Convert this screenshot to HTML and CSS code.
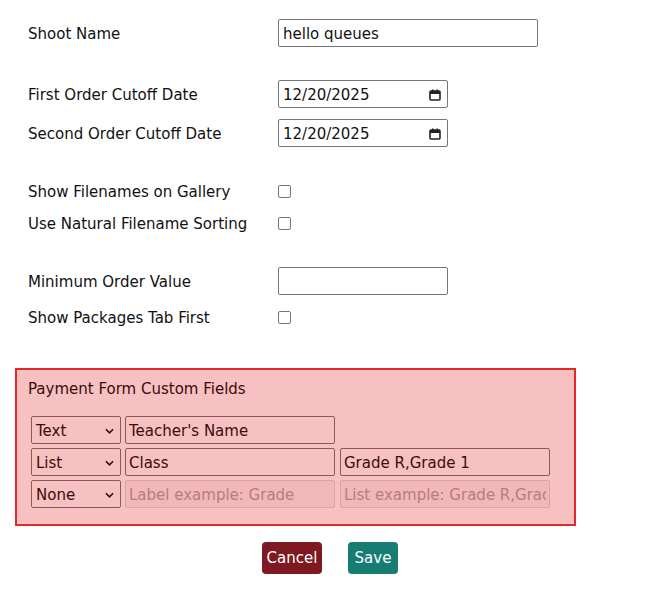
FILE: index.html
```html
<!DOCTYPE html>
<html>
<head>
<meta charset="utf-8">
<link rel="stylesheet" href="styles.css">
</head>
<body>
<div class="page">
  <div class="row r1"><label class="lbl">Shoot Name</label><input class="txt wide" type="text" value="hello queues"></div>
  <div class="row r2"><label class="lbl">First Order Cutoff Date</label><div class="txt date"><span>12/20/2025</span><svg class="cal" viewBox="0 0 12 12" width="12" height="12"><rect x="1" y="2" width="10" height="9" rx="1" fill="none" stroke="#222" stroke-width="1.6"/><rect x="1" y="2" width="10" height="3" fill="#222"/><rect x="3" y="0.5" width="1.6" height="2.5" fill="#222"/><rect x="7.4" y="0.5" width="1.6" height="2.5" fill="#222"/></svg></div></div>
  <div class="row r3"><label class="lbl">Second Order Cutoff Date</label><div class="txt date"><span>12/20/2025</span><svg class="cal" viewBox="0 0 12 12" width="12" height="12"><rect x="1" y="2" width="10" height="9" rx="1" fill="none" stroke="#222" stroke-width="1.6"/><rect x="1" y="2" width="10" height="3" fill="#222"/><rect x="3" y="0.5" width="1.6" height="2.5" fill="#222"/><rect x="7.4" y="0.5" width="1.6" height="2.5" fill="#222"/></svg></div></div>
  <div class="row chk r4"><label class="lbl">Show Filenames on Gallery</label><span class="box"></span></div>
  <div class="row chk r5"><label class="lbl">Use Natural Filename Sorting</label><span class="box"></span></div>
  <div class="row r6"><label class="lbl">Minimum Order Value</label><input class="txt mid" type="text" value=""></div>
  <div class="row chk r7"><label class="lbl">Show Packages Tab First</label><span class="box"></span></div>

  <div class="custom">
    <div class="custom-title">Payment Form Custom Fields</div>
    <div class="frow">
      <div class="sel"><span>Text</span><svg viewBox="0 0 10 6" width="9" height="6"><path d="M1 1 L5 5 L9 1" fill="none" stroke="#3a0c0c" stroke-width="1.8"/></svg></div>
      <input class="fin" type="text" value="Teacher's Name">
    </div>
    <div class="frow">
      <div class="sel"><span>List</span><svg viewBox="0 0 10 6" width="9" height="6"><path d="M1 1 L5 5 L9 1" fill="none" stroke="#3a0c0c" stroke-width="1.8"/></svg></div>
      <input class="fin" type="text" value="Class">
      <input class="fin" type="text" value="Grade R,Grade 1">
    </div>
    <div class="frow">
      <div class="sel"><span>None</span><svg viewBox="0 0 10 6" width="9" height="6"><path d="M1 1 L5 5 L9 1" fill="none" stroke="#3a0c0c" stroke-width="1.8"/></svg></div>
      <input class="fin dis" type="text" placeholder="Label example: Grade" disabled>
      <input class="fin dis" type="text" placeholder="List example: Grade R,Grade 1" disabled>
    </div>
  </div>
</div>
<div class="actions">
  <button class="btn cancel">Cancel</button>
  <button class="btn save">Save</button>
</div>
</body>
</html>
```
FILE: styles.css
```css
html, body {
  margin: 0;
  padding: 0;
  background: #fff;
}
body {
  font-family: "DejaVu Sans", Verdana, sans-serif;
  font-size: 15px;
  color: #111;
}
.page {
  padding: 19px 0 0 15px;
}
.row {
  display: flex;
  align-items: center;
  height: 28px;
  padding-left: 13px;
}
.row.chk { height: 20px; }
.r2 { margin-top: 33px; }
.r3 { margin-top: 11px; }
.r4 { margin-top: 34px; }
.r5 { margin-top: 12px; }
.r6 { margin-top: 34px; }
.r7 { margin-top: 12px; }
.lbl {
  width: 250px;
  flex: none;
  padding-top: 2px;
}
.txt {
  box-sizing: border-box;
  height: 28px;
  border: 1px solid #767676;
  border-radius: 2px;
  font-family: inherit;
  font-size: 15px;
  color: #111;
  padding: 1px 4px 0;
  background: #fff;
  outline: none;
  margin: 0;
}
.wide { width: 260px; }
.mid { width: 170px; }
.date {
  width: 170px;
  display: flex;
  align-items: center;
  justify-content: space-between;
  padding: 1px 6px 0 4px;
}
.box {
  width: 11px;
  height: 11px;
  border: 1px solid #767676;
  border-radius: 2px;
  background: #fff;
}
.custom {
  margin-top: 41px;
  box-sizing: border-box;
  width: 561px;
  height: 158px;
  border: 2px solid #e32a2a;
  background: #f7c1c1;
  padding: 9px 0 0 14px;
  color: #3a0c0c;
}
.custom-title {
  height: 20px;
  line-height: 20px;
  margin-left: -3px;
  margin-bottom: 17px;
}
.frow {
  display: flex;
  gap: 5px;
  margin-bottom: 4px;
  height: 28px;
}
.sel, .fin {
  box-sizing: border-box;
  height: 28px;
  border: 1px solid #8d5858;
  border-radius: 2px;
  padding: 1px 3px 0;
  margin: 0;
  white-space: nowrap;
  overflow: hidden;
  font-family: inherit;
  font-size: 15px;
  color: #3a0c0c;
  background: transparent;
  outline: none;
}
.sel {
  width: 90px;
  display: flex;
  align-items: center;
  justify-content: space-between;
  padding: 1px 6px 0 4px;
  margin-right: -1px;
}
.fin { width: 210px; }
.fin.dis {
  border-color: #dca3a3;
  background: #f2b8b8;
}
.fin.dis::placeholder {
  color: #b77c7c;
  opacity: 1;
}
.actions {
  display: flex;
  justify-content: center;
  gap: 26px;
  margin-top: 16px;
  padding-right: 1px;
}
.btn {
  height: 32px;
  border: none;
  border-radius: 4px;
  color: #fff;
  font-family: inherit;
  font-size: 15px;
  padding: 0 4px;
}
.cancel { background: #7f1820; width: 60px; }
.save { background: #177d72; width: 50px; }
```
